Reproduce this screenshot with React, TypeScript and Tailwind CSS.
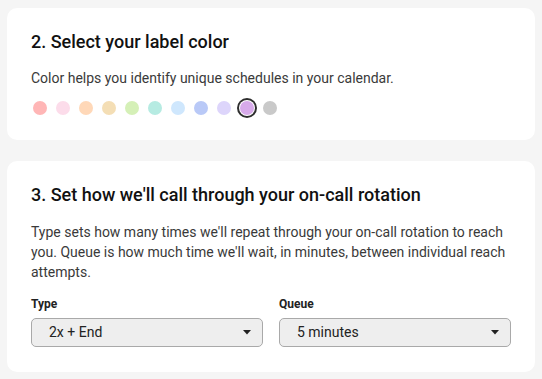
import React from "react";

const colors = [
  "#ffb6b6",
  "#fcdcea",
  "#ffd8b8",
  "#f4deb5",
  "#d5f0b7",
  "#b6ebe2",
  "#cfe7fd",
  "#b9c9f7",
  "#ddd5fb",
  "#d7aaea",
  "#c9c9c9",
];

function Caret() {
  return (
    <svg width="8" height="5" viewBox="0 0 8 5" className="shrink-0">
      <path d="M0 0 L8 0 L4 4.5 Z" fill="#222" />
    </svg>
  );
}

function Select({ label, value }: { label: string; value: string }) {
  return (
    <div className="flex flex-col">
      <div className="text-[12px] leading-4 font-bold text-[#222]">{label}</div>
      <div className="mt-[6px] h-[29px] rounded-[5px] border border-[#a9a9a9] bg-[#eeeeee] flex items-center justify-between pl-[17px] pr-[11px]">
        <span className="text-[14px] text-[#222]">{value}</span>
        <Caret />
      </div>
    </div>
  );
}

export default function App() {
  return (
    <div
      className="w-[542px] h-[379px] bg-[#f5f5f5] pt-[8px] px-[7px]"
      style={{ fontFamily: "Roboto, 'Liberation Sans', sans-serif" }}
    >
      <div className="bg-white rounded-[10px] pl-[24px] pr-[24px] pt-[22px] pb-[25px]">
        <div className="text-[18px] leading-6 font-medium text-[#111]">2. Select your label color</div>
        <div className="mt-[14px] text-[14px] leading-5 text-[#3a3a3a]">
          Color helps you identify unique schedules in your calendar.
        </div>
        <div className="mt-[13px] flex gap-[9px] pl-[2px]">
          {colors.map((c, i) => (
            <div
              key={i}
              className={
                "w-[14px] h-[14px] rounded-full " +
                (i === 9 ? "shadow-[0_0_0_1px_#ffffff,0_0_0_3px_#2e2e2e]" : "")
              }
              style={{ backgroundColor: c }}
            />
          ))}
        </div>
      </div>

      <div className="mt-[21px] bg-white rounded-[10px] pl-[24px] pr-[24px] pt-[22px] pb-[25px]">
        <div className="text-[18px] leading-6 font-medium text-[#111]">
          3. Set how we'll call through your on-call rotation
        </div>
        <div className="mt-[15px] text-[14px] leading-5 text-[#3a3a3a]">
          Type sets how many times we'll repeat through your on-call rotation to reach you. Queue is how much
          time we'll wait, in minutes, between individual reach attempts.
        </div>
        <div className="mt-[14px] grid grid-cols-2 gap-[16px]">
          <Select label="Type" value="2x + End" />
          <Select label="Queue" value="5 minutes" />
        </div>
      </div>
    </div>
  );
}
